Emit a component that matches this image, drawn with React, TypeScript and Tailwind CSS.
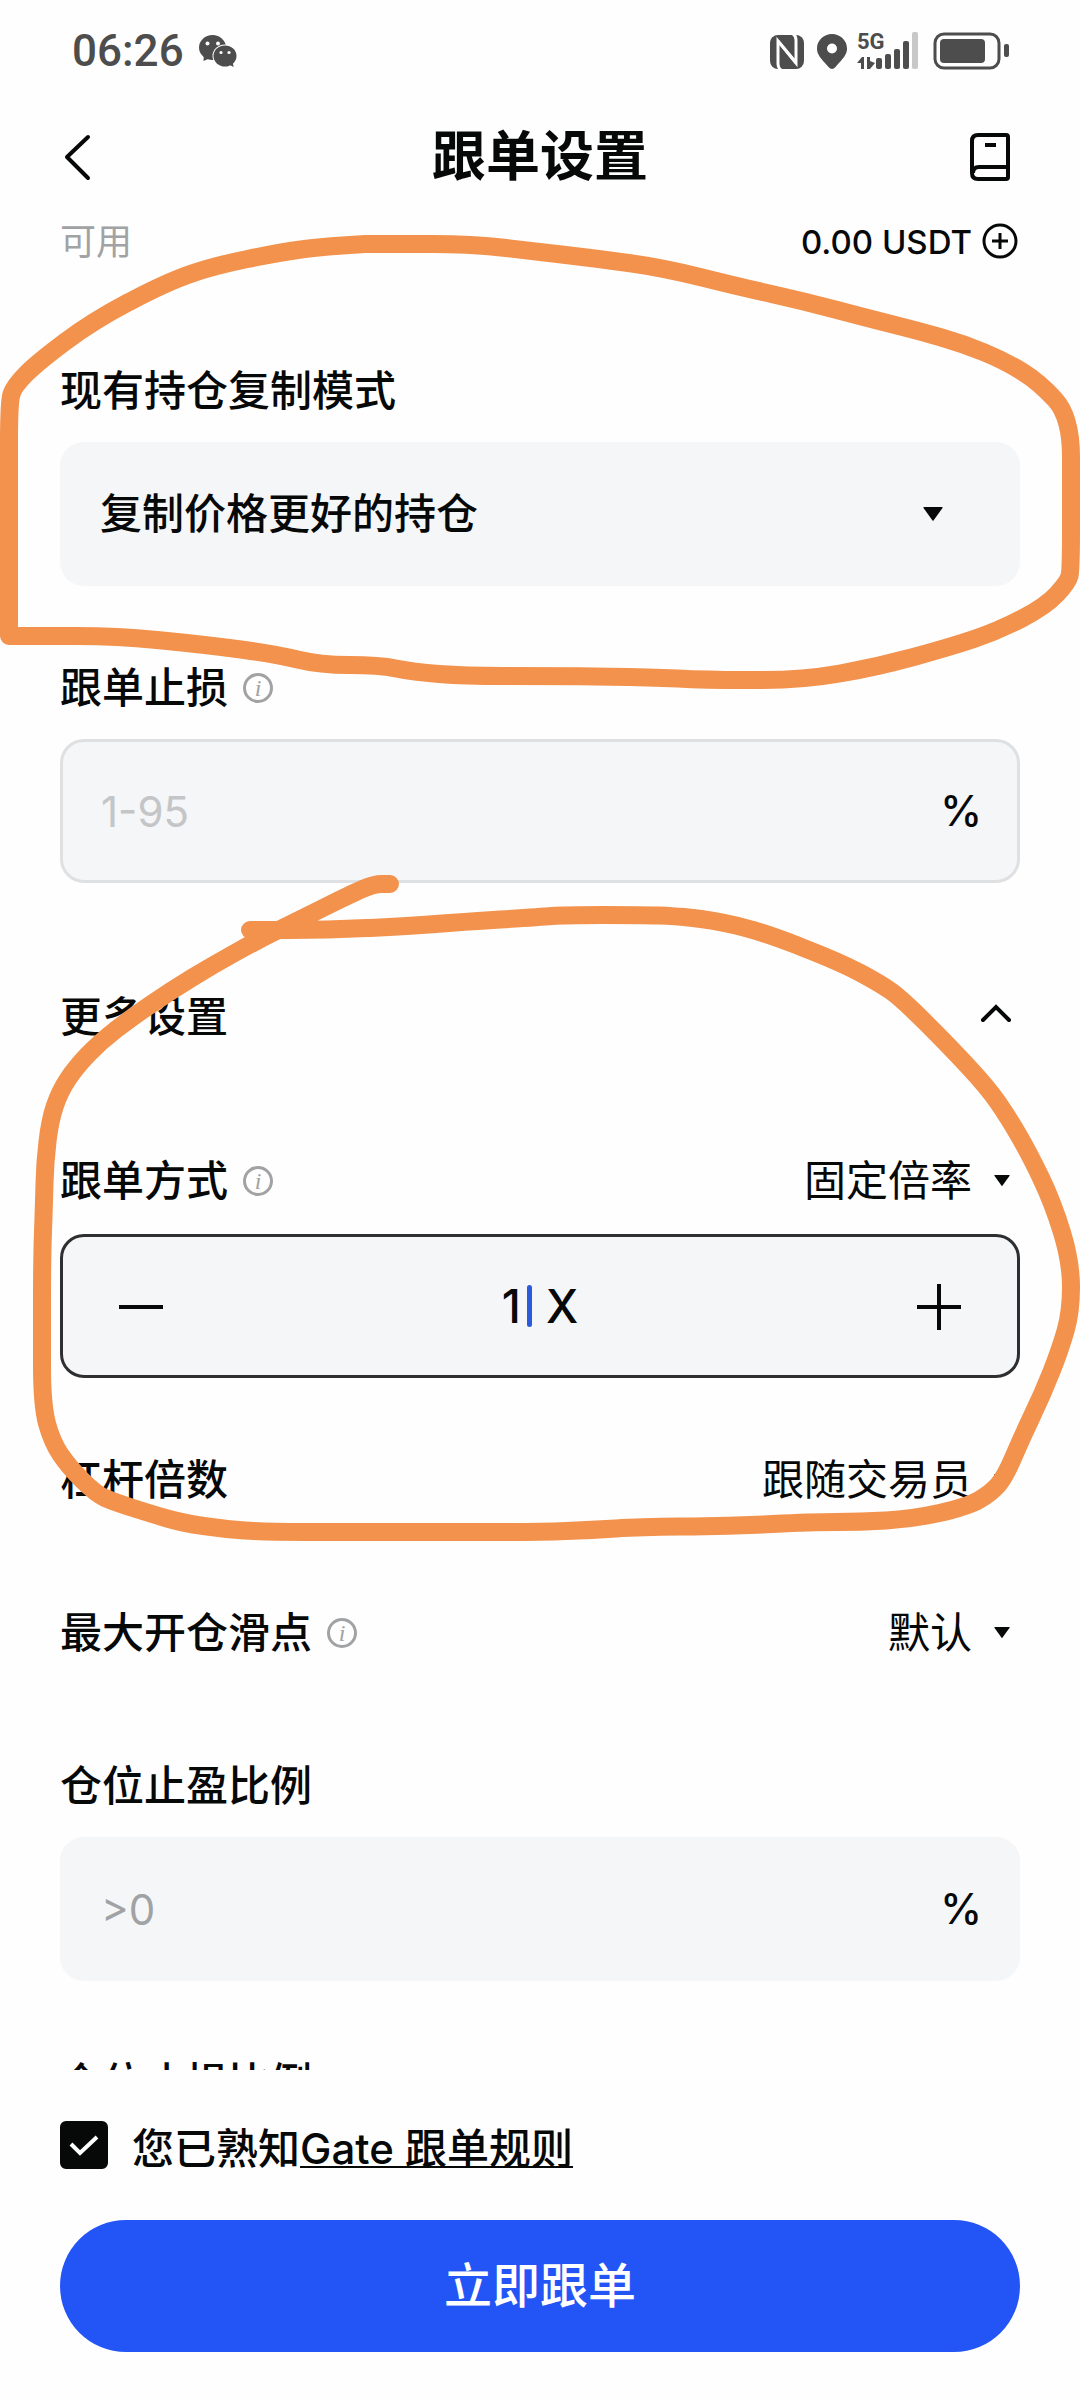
import { useState } from "react";
import type { ReactNode } from "react";

type Point = [number, number];

const upperMark: Point[] = [
  [365, 244], [320, 247], [282, 252], [213, 266], [165, 283], [93, 321], [38, 362], [14, 386], [9, 402],
  [9, 636], [9, 636], [117, 636], [207, 645], [275, 654], [320, 665], [379, 665], [413, 672], [465, 676],
  [540, 676], [650, 677], [705, 680], [803, 680], [877, 667], [950, 647], [998, 631], [1046, 606],
  [1068, 582], [1071, 570], [1071, 417], [1039, 382], [1005, 361], [964, 344], [919, 331], [871, 319],
  [803, 301], [740, 287], [664, 268], [600, 259], [540, 252], [472, 244], [365, 244],
];

const lowerMark: Point[] = [
  [390, 884], [374, 884], [351, 894], [303, 918], [258, 940], [213, 965], [172, 990], [131, 1018],
  [100, 1042], [76, 1067], [60, 1091], [50, 1120], [45, 1163], [44, 1203], [42, 1260], [42, 1405],
  [52, 1442], [69, 1467], [96, 1494], [114, 1502], [155, 1515], [183, 1523], [224, 1529],
  [265, 1532], [540, 1532], [592, 1530], [640, 1527], [733, 1526], [812, 1522], [860, 1522],
  [912, 1519], [967, 1507], [991, 1493], [1005, 1477], [1022, 1437], [1043, 1393], [1060, 1350],
  [1071, 1312], [1071, 1262], [1053, 1203], [1029, 1153], [1008, 1117], [988, 1088], [950, 1047],
  [902, 999], [881, 984], [840, 962], [760, 931], [712, 920], [674, 916], [643, 915], [564, 915],
  [540, 917], [461, 922], [410, 926], [327, 930], [250, 930],
];

// Moves from a towards b, at most 40 units and never past the middle
function towards([ax, ay]: Point, [bx, by]: Point) {
  const t = Math.min(0.5, 40 / Math.hypot(bx - ax, by - ay));
  return `${ax + (bx - ax) * t} ${ay + (by - ay) * t}`;
}

// Joins the points with straight runs and softened corners
function toPath(points: Point[]) {
  let d = `M${points[0][0]} ${points[0][1]}`;
  for (let i = 1; i < points.length - 1; i++) {
    const p = points[i];
    d += ` L${towards(p, points[i - 1])} Q${p[0]} ${p[1]} ${towards(p, points[i + 1])}`;
  }
  const last = points[points.length - 1];
  return `${d} L${last[0]} ${last[1]}`;
}

function Marks() {
  return (
    <svg
      className="pointer-events-none absolute inset-0 h-full w-full"
      viewBox="0 0 1080 2400"
      preserveAspectRatio="none"
      fill="none"
      stroke="#f2924d"
      strokeWidth="18"
      strokeLinecap="round"
      strokeLinejoin="round"
      aria-hidden="true"
    >
      <path d={toPath(upperMark)} />
      <path d={toPath(lowerMark)} />
    </svg>
  );
}

function StatusBar() {
  return (
    <div className="flex h-[104px] shrink-0 items-start justify-between pt-8 pr-[70px] pl-[72px] text-[#4d4d4d]">
      <div className="flex h-[38px] items-center gap-[15px]">
        <span className="font-[Roboto] text-[44px] leading-[38px] font-medium">06:26</span>
        {/* WeChat */}
        <svg width="38" height="34" viewBox="0 0 38 34" aria-hidden="true">
          <ellipse cx="13.500" cy="13.500" rx="13.500" ry="12.500" fill="currentColor" />
          <path d="M5 20l-.5 7 7-3z" fill="currentColor" />
          <ellipse cx="26" cy="22" rx="12.500" ry="11.500" fill="#fefefe" />
          <ellipse cx="26" cy="22" rx="11.500" ry="10.500" fill="currentColor" />
          <path d="M29 30l5.500 3-1-7z" fill="currentColor" />
          <g fill="#fefefe">
            <circle cx="8.500" cy="9.500" r="2" />
            <circle cx="19" cy="9.500" r="2" />
            <circle cx="22" cy="18.500" r="1.600" />
            <circle cx="30" cy="18.500" r="1.600" />
          </g>
        </svg>
      </div>
      <div className="flex h-[38px] items-center">
        {/* NFC */}
        <svg width="36" height="38" viewBox="0 0 36 38" aria-hidden="true">
          <rect x="1" y="3" width="34" height="34" rx="8" fill="currentColor" />
          <path d="M12 38q-3-2-3-6V9l18 22V8q0-4-3-6" fill="none" stroke="#fefefe" strokeWidth="3" />
          <path d="M10 8v4l16 20v-5z" fill="#fefefe" />
        </svg>
        <svg className="ml-3" width="30" height="38" viewBox="0 0 30 38" aria-hidden="true">
          <path
            fillRule="evenodd"
            fill="currentColor"
            d="M15 2C6.700 2 0 8.500 0 16.500c0 6 3.500 9.500 11.500 18.500q3.500 4 7 0C26.500 26 30 22.500 30 16.500 30 8.500 23.300 2 15 2zm0 9.500a5 5 0 1 1 0 10 5 5 0 0 1 0-10z"
          />
        </svg>
        <div className="relative ml-2.5 h-[38px] w-16">
          <span className="absolute top-0 left-0 font-[Roboto] text-[22px] leading-5 font-bold">5G</span>
          <svg className="h-[38px] w-16" viewBox="0 0 64 38" fill="currentColor" aria-hidden="true">
            <path d="M0 31l5-6h2v12H4v-6zM10 25h3v4l5 2-5 6h-3z" />
            <rect x="19" y="26" width="6" height="11" rx="2" />
            <rect x="28" y="22" width="6" height="15" rx="2" />
            <rect x="37" y="17" width="6" height="20" rx="2" />
            <rect x="46" y="9" width="6" height="28" rx="2" />
            <rect x="55" y="0" width="6" height="37" rx="2" fill="#c8c8c8" />
          </svg>
        </div>
        <svg className="ml-3" width="77" height="38" viewBox="0 0 77 38" aria-hidden="true">
          <rect x="2" y="2" width="64" height="34" rx="9" fill="none" stroke="currentColor" strokeWidth="3" />
          <rect x="7" y="7" width="45" height="24" rx="4" fill="currentColor" />
          <rect x="71" y="12" width="5" height="13" rx="2" fill="currentColor" />
        </svg>
      </div>
    </div>
  );
}

function InfoButton({ label }: { label: string }) {
  return (
    <button
      aria-label={label}
      className="flex size-[30px] items-center justify-center rounded-full border-[3px] border-[#a0a2a4] font-['Liberation_Serif',serif] text-2xl leading-6 text-[#a0a2a4] italic"
    >
      i
    </button>
  );
}

function Caret({ className }: { className: string }) {
  return (
    <svg className={className} viewBox="0 0 20 14" aria-hidden="true">
      <path d="M1 0h18q1 0 .5 1L10.500 13.500q-.5.5-1 0L.5 1Q0 0 1 0z" fill="#070808" />
    </svg>
  );
}

function InlineSelect({ id, value }: { id: string; value: string }) {
  return (
    <div className="relative flex items-center">
      <select id={id} className="field-sizing-content h-14 appearance-none bg-transparent pr-12 leading-[56px]">
        <option>{value}</option>
      </select>
      <Caret className="pointer-events-none absolute right-2.5 w-4" />
    </div>
  );
}

function Label({ htmlFor, children }: { htmlFor: string; children: ReactNode }) {
  return (
    <label htmlFor={htmlFor} className="font-medium">
      {children}
    </label>
  );
}

function PercentField({ id, placeholder, className }: { id: string; placeholder: string; className: string }) {
  return (
    <div className="mt-[23px] flex items-center">
      <input
        id={id}
        placeholder={placeholder}
        className={`h-36 w-full rounded-3xl border-[3px] bg-[#f4f6f8] pr-24 pl-[38px] outline-none ${className}`}
      />
      <span className="pointer-events-none -ml-20 w-20 pr-[38px] text-right font-medium">%</span>
    </div>
  );
}

export default function App() {
  const [ratio, setRatio] = useState(1);
  const [agreed, setAgreed] = useState(true);

  return (
    <div className="relative flex h-screen flex-col overflow-hidden bg-[#fefefe] font-[Inter,'Noto_Sans_CJK_SC',sans-serif] text-[42px] leading-[56px] text-[#070808]">
      <StatusBar />

      <header className="flex h-[106px] shrink-0 items-center justify-between px-[60px]">
        <button aria-label="返回" className="w-12">
          <svg width="36" height="48" viewBox="0 0 36 48" fill="none" stroke="currentColor" strokeWidth="4" strokeLinecap="round" strokeLinejoin="round">
            <path d="M28 4L7 24l21 21" />
          </svg>
        </button>
        <h1 className="text-[54px] leading-[72px] font-bold">跟单设置</h1>
        <button aria-label="说明" className="flex w-12 justify-end pr-2.5">
          <svg width="40" height="48" viewBox="0 0 40 48" fill="none" stroke="currentColor" strokeWidth="4" strokeLinejoin="round" className="shrink-0">
            <path d="M38 34V4q0-2-2-2H8Q2 2 2 8v32q0 6 6 6h28q2 0 2-2V34H9q-6 0-6 6M15 12h11" />
          </svg>
        </button>
      </header>

      <main className="min-h-0 flex-1 overflow-hidden px-[60px]">
        <div className="flex h-16 items-center justify-between text-[36px]">
          <span className="text-[#a0a2a4]">可用</span>
          <div className="flex items-center gap-2">
            <span className="text-[33px] font-medium">0.00 USDT</span>
            <button aria-label="充值">
              <svg width="40" height="40" viewBox="0 0 40 40" fill="none" stroke="currentColor" strokeWidth="3">
                <circle cx="20" cy="19" r="16" />
                <path d="M12 19h16M20 11v16" />
              </svg>
            </button>
          </div>
        </div>

        {/* 现有持仓复制模式 */}
        <div className="mt-[89px] flex">
          <Label htmlFor="mode">现有持仓复制模式</Label>
        </div>
        <div className="relative mt-[23px] flex items-center">
          <select id="mode" className="h-36 w-full appearance-none rounded-3xl bg-[#f4f6f8] px-10 font-medium">
            <option>复制价格更好的持仓</option>
          </select>
          <Caret className="pointer-events-none absolute right-[77px] w-5" />
        </div>

        {/* 跟单止损 */}
        <div className="mt-[74px] flex items-center gap-[15px]">
          <Label htmlFor="stopLoss">跟单止损</Label>
          <InfoButton label="跟单止损说明" />
        </div>
        <PercentField id="stopLoss" placeholder="1-95" className="border-[#dfe0e2] placeholder:text-[#c4c5c7]" />

        {/* 更多设置 */}
        <button className="mt-[106px] flex w-full items-center justify-between font-medium">
          更多设置
          <svg width="48" height="32" viewBox="0 0 48 32" fill="none" stroke="currentColor" strokeWidth="4" strokeLinecap="round">
            <path d="M11 19l13-13 13 13" />
          </svg>
        </button>

        {/* 跟单方式 */}
        <div className="mt-[108px] flex items-center justify-between">
          <div className="flex items-center gap-[15px]">
            <Label htmlFor="method">跟单方式</Label>
            <InfoButton label="跟单方式说明" />
          </div>
          <InlineSelect id="method" value="固定倍率" />
        </div>
        <div className="mt-[25px] flex h-36 items-center justify-between rounded-3xl border-[3px] border-[#2e2f31] bg-[#f4f6f8] px-[54px]">
          <button aria-label="减少" onClick={() => setRatio(Math.max(1, ratio - 1))}>
            <svg width="48" height="48" viewBox="0 0 48 48" stroke="currentColor" strokeWidth="4">
              <path d="M2 25h44" />
            </svg>
          </button>
          <div className="flex items-center text-[46px] font-medium">
            <input
              aria-label="倍率"
              value={ratio}
              onChange={(e) => setRatio(Number(e.target.value) || 1)}
              className="field-sizing-content bg-transparent caret-transparent outline-none"
            />
            <span className="ml-1.5 h-[42px] w-[5px] rounded-sm bg-[#2b5bdc]" />
            <span className="ml-3.5">X</span>
          </div>
          <button aria-label="增加" onClick={() => setRatio(ratio + 1)}>
            <svg width="48" height="48" viewBox="0 0 48 48" stroke="currentColor" strokeWidth="4">
              <path d="M2 25h44M24 2v46" />
            </svg>
          </button>
        </div>

        {/* 杠杆倍数 */}
        <div className="mt-[74px] flex items-center justify-between">
          <Label htmlFor="leverage">杠杆倍数</Label>
          <InlineSelect id="leverage" value="跟随交易员" />
        </div>

        {/* 最大开仓滑点 */}
        <div className="mt-[97px] flex items-center justify-between">
          <div className="flex items-center gap-[15px]">
            <Label htmlFor="slippage">最大开仓滑点</Label>
            <InfoButton label="最大开仓滑点说明" />
          </div>
          <InlineSelect id="slippage" value="默认" />
        </div>

        {/* 仓位止盈比例 */}
        <div className="mt-[97px] flex">
          <Label htmlFor="takeProfit">仓位止盈比例</Label>
        </div>
        <PercentField id="takeProfit" placeholder=">0" className="border-transparent placeholder:text-[#a0a2a4]" />

        {/* 仓位止损比例, scrolled under the footer */}
        <h2 className="mt-[74px] font-medium">仓位止损比例</h2>
      </main>

      <footer className="shrink-0 px-[60px] pt-[51px] pb-12">
        <div className="flex items-start gap-6 font-medium">
          <span className="relative flex size-12">
            <input
              id="agree"
              type="checkbox"
              checked={agreed}
              onChange={(e) => setAgreed(e.target.checked)}
              className="size-12 appearance-none rounded-md border-2 border-[#070808] checked:bg-[#070808]"
            />
            {agreed && (
              <svg className="pointer-events-none absolute inset-0" viewBox="0 0 48 48" fill="none" stroke="#fff" strokeWidth="4">
                <path d="M11 23l9 9 17-16" />
              </svg>
            )}
          </span>
          <p>
            <label htmlFor="agree">您已熟知</label>
            <a href="#rules" className="underline decoration-2 underline-offset-2">
              Gate 跟单规则
            </a>
          </p>
        </div>
        <button className="mt-[43px] h-[132px] w-full rounded-full bg-[#2354f6] text-[48px] font-medium text-white">
          立即跟单
        </button>
      </footer>

      <Marks />
    </div>
  );
}
